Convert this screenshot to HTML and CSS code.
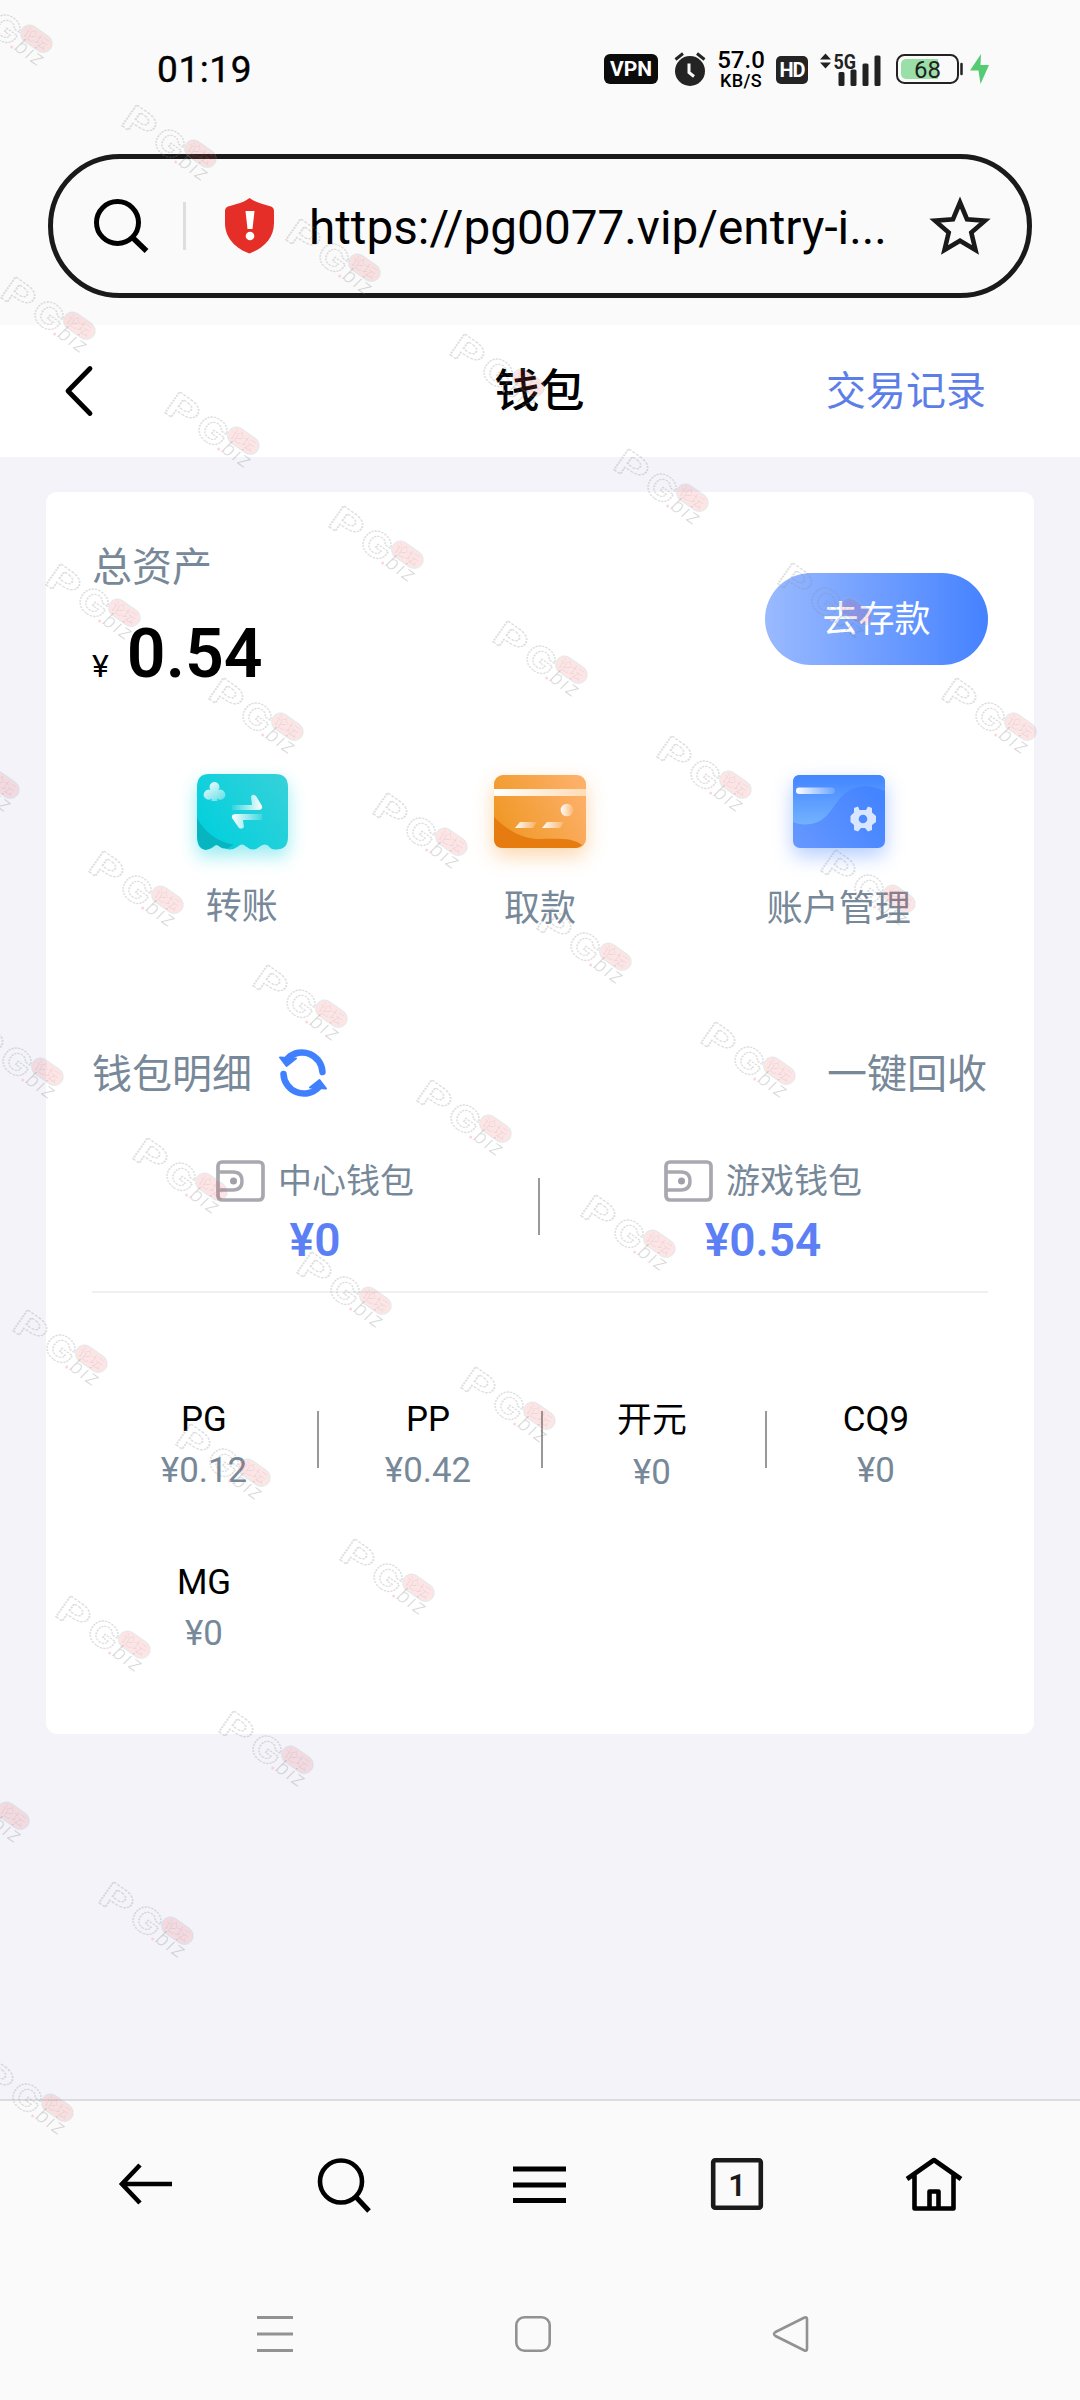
FILE: index.html
```html
<!DOCTYPE html>
<html lang="zh-CN">
<head>
<meta charset="utf-8">
<title>钱包</title>
<link rel="stylesheet" href="styles.css">
</head>
<body>
<div class="screen">
  <div class="status">
    <span class="time">01:19</span>
    <div class="indicators">
      <span class="vpn">VPN</span>
      <svg class="alarm" width="32" height="34" viewBox="0 0 32 34"><circle cx="16" cy="19" r="15" fill="#242424"/><path d="M1.5 7.500 9 1.500M30.500 7.500 23 1.500" stroke="#242424" stroke-width="3" fill="none"/><path d="M15 11.500v9l5 4" fill="none" stroke="#fafafa" stroke-width="3"/></svg>
      <div class="speed"><span>57.0</span><small>KB/S</small></div>
      <span class="hd">HD</span>
      <svg class="signal" width="62" height="34" viewBox="0 0 62 34"><path d="M0 7.500 5.500 1.500 11 7.500zM0 10.500 5.500 16.500 11 10.500z" fill="#222"/><text x="13.500" y="16.500" font-size="20" font-weight="700" textLength="22.500" lengthAdjust="spacingAndGlyphs" fill="#222">5G</text><path d="M20 21.500h3v11h-3zM32 19h3v13.500h-3zM44 13h3v19.500h-3zM56 5h3v27.500h-3z" fill="#222" stroke="#222" stroke-width="3" stroke-linejoin="round"/></svg>
      <svg class="battery" width="94" height="30" viewBox="0 0 94 30"><rect x="1" y="1" width="61" height="28" rx="7.500" fill="#fafafa" stroke="#222" stroke-width="2"/><path d="M42 5H10a5 5 0 0 0-5 5v10a5 5 0 0 0 5 5h32z" fill="#9bdfa8"/><path d="M65.500 10v10" stroke="#222" stroke-width="2.500" stroke-linecap="round"/><text x="31.500" y="23.500" font-size="24" text-anchor="middle" fill="#222">68</text><path d="M85 0 74 16.500h8.500L84.500 30 93 11h-8.500z" fill="#55cb73"/></svg>
    </div>
  </div>

  <div class="address">
    <svg class="find" width="56" height="56" viewBox="0 0 56 56"><circle cx="23.500" cy="23.500" r="21" fill="none" stroke="#000" stroke-width="5"/><path d="m38 38 14.500 14" stroke="#000" stroke-width="5.500"/></svg>
    <i class="bar"></i>
    <svg class="shield" width="49" height="56" viewBox="0 0 49 56"><path d="M24.500 0C30 4.500 39 6.500 46 8.500Q49 9.500 49 13v12C49 41 37 51 24.500 55.500 12 51 0 41 0 25V13Q0 9.500 3 8.500C10 6.500 19 4.500 24.500 0Z" fill="#e42e27"/><path d="M20.500 13h9l-2 18h-5z" fill="#fff"/><circle cx="25" cy="38" r="4.300" fill="#fff"/></svg>
    <span class="url">https://pg0077.vip/entry-i...</span>
    <svg class="star" width="60" height="58" viewBox="0 0 60 58"><path d="m30 5.500 7 16.700 18 1.500L41.300 35.500 45.500 53 30 43.700 14.500 53l4.200-17.500L5 23.700l18-1.500z" fill="none" stroke="#1a1a1a" stroke-width="4.600"/></svg>
  </div>

  <header class="header">
    <svg class="back" width="28" height="50" viewBox="0 0 28 50"><path d="M25 2.500 3 25l22 22.500" fill="none" stroke="#000" stroke-width="4.800" stroke-linecap="round" stroke-linejoin="round"/></svg>
    <h1>钱包</h1>
    <a>交易记录</a>
  </header>

  <main>
    <section class="card">
      <div class="assets">
        <div>
          <p class="muted">总资产</p>
          <p class="total"><small>¥</small><b>0.54</b></p>
        </div>
        <button class="deposit">去存款</button>
      </div>

      <div class="actions">
        <div class="action first">
          <svg class="teal" width="92" height="76" viewBox="0 0 92 76"><defs><linearGradient id="tg" x1="0" y1=".7" x2="1" y2=".1"><stop stop-color="#02d0dd"/><stop offset="1" stop-color="#35d1d9"/></linearGradient><linearGradient id="w1"><stop stop-color="#fff" stop-opacity=".1"/><stop offset="1" stop-color="#fff"/></linearGradient><linearGradient id="w2"><stop stop-color="#fff"/><stop offset="1" stop-color="#fff" stop-opacity=".15"/></linearGradient><linearGradient id="w3" x2=".8" y2="1"><stop stop-color="#fff"/><stop offset="1" stop-color="#fff" stop-opacity=".35"/></linearGradient></defs><path d="M12 0h66q13 0 13 13v50q0 13-13 12.500-4 0-6-3-4-4-9 0-7 6-14 0-4-4-8 0-8 6-16 0-4-4-8 0-3 3-9 3Q0 75 0 62V13Q0 0 12 0Z" fill="url(#tg)"/><path d="M0 44q12 22 37 27-3 1-4 2-5 3-10 0-4-4-8 0-3 3-7 3Q1 74 0 62z" fill="#06b5bf"/><path d="M12.500 13a5 5 0 1 1 9 3 5 5 0 1 1-1.500 8.500l.5 2.500h-6l.5-2.500A5 5 0 1 1 13.500 16Q12.500 14.500 12.500 13Z" fill="url(#w3)"/><path d="M35 31h20l-1-8q1-4 5-1l6 10q1 4-4 4H35z" fill="url(#w1)"/><path d="M65 46H46l1 7q-2 3-5 1l-7-10q-1-4 4-4h26z" fill="url(#w2)"/></svg>
          <span>转账</span>
        </div>
        <div class="action">
          <svg class="orange" width="92" height="73" viewBox="0 0 92 73"><defs><linearGradient id="og" y1=".7" y2=".3"><stop stop-color="#ef9724"/><stop offset="1" stop-color="#fdb068"/></linearGradient><linearGradient id="os"><stop stop-color="#fff"/><stop offset="1" stop-color="#ffdcb5"/></linearGradient></defs><rect width="92" height="73" rx="9" fill="url(#og)"/><path d="M0 14h92v7H0z" fill="url(#os)"/><path d="M0 42C14 56 28 63 42 64c20 0 36-2 46 6q-3 3-6 3H9q-9 0-9-9z" fill="#e67b10"/><circle cx="73" cy="35" r="6.300" fill="url(#w2)"/><path d="m26 47-5 6h18l4-6z" fill="url(#w2)"/><path d="m53 47-5 6h18l4-6z" fill="url(#w2)"/></svg>
          <span>取款</span>
        </div>
        <div class="action">
          <svg class="blue" width="92" height="73" viewBox="0 0 92 73"><defs><linearGradient id="bg" x1="0" y1="1" x2="1" y2=".4"><stop stop-color="#6798ff"/><stop offset="1" stop-color="#4384ff"/></linearGradient><linearGradient id="bw" x2="0" y2="1"><stop stop-color="#4285ff"/><stop offset="1" stop-color="#73b2ff"/></linearGradient></defs><rect width="92" height="73" rx="7" fill="url(#bg)"/><path d="M7 0h78q7 0 7 7v9Q64 4 48 22C38 34 34 46 18 49 10 50 4 49 0 47V7Q0 0 7 0Z" fill="url(#bw)"/><rect x="3" y="12.500" width="39" height="6.500" rx="3.200" fill="url(#w2)"/><g transform="translate(70 44)"><path d="M-3.500-9-5-12.500l-4 1.500v4.500L-12.500-3v6L-9 6v5l4 1.500L-2 9h4l3 3.500L9 11V6l4-3v-6l-4-3.500V-11l-4-1.500L3-9ZM-4.300 0a4.300 4.300 0 1 0 8.600 0 4.300 4.300 0 1 0-8.600 0Z" fill="#e4edff" fill-opacity=".93" fill-rule="evenodd"/></g></svg>
          <span>账户管理</span>
        </div>
      </div>

      <div class="detail-head">
        <span>钱包明细</span>
        <svg width="50" height="50" viewBox="0 0 50 50"><path d="M10 10A20.500 20.500 0 0 1 44.500 24M40 40A20.500 20.500 0 0 1 5.500 26" fill="none" stroke="#4080ff" stroke-width="6.500" stroke-linecap="round"/><path d="M2 9.500 18 10.500 8.500 18zM48 40.500 32 39.500 41.500 32z" fill="#4080ff" stroke="#4080ff" stroke-width="2" stroke-linejoin="round"/></svg>
        <a>一键回收</a>
      </div>

      <div class="wallets">
        <div class="wallet">
          <div class="wallet-name"><svg width="49" height="42" viewBox="0 0 49 42"><rect x="2" y="2" width="45" height="38" rx="4" fill="none" stroke="#a8a8b0" stroke-width="3.700"/><path d="M2 12h15q9 0 9 9t-9 9H2" fill="none" stroke="#a8a8b0" stroke-width="3.400"/><circle cx="17.500" cy="21" r="3.500" fill="#a0a0a8"/></svg><span>中心钱包</span></div>
          <strong>¥0</strong>
        </div>
        <i class="split"></i>
        <div class="wallet">
          <div class="wallet-name"><svg width="49" height="42" viewBox="0 0 49 42"><rect x="2" y="2" width="45" height="38" rx="4" fill="none" stroke="#a8a8b0" stroke-width="3.700"/><path d="M2 12h15q9 0 9 9t-9 9H2" fill="none" stroke="#a8a8b0" stroke-width="3.400"/><circle cx="17.500" cy="21" r="3.500" fill="#a0a0a8"/></svg><span>游戏钱包</span></div>
          <strong>¥0.54</strong>
        </div>
      </div>

      <div class="platforms">
        <div class="platform line"><b>PG</b><span>¥0.12</span></div>
        <div class="platform line"><b>PP</b><span>¥0.42</span></div>
        <div class="platform line cjk"><b>开元</b><span>¥0</span></div>
        <div class="platform"><b>CQ9</b><span>¥0</span></div>
        <div class="platform"><b>MG</b><span>¥0</span></div>
      </div>
    </section>
  </main>

  <nav class="browser-nav">
    <svg width="60" height="60" viewBox="0 0 60 60"><path d="M24 11 6 30l18 19M6 30h50" fill="none" stroke="#000" stroke-width="4.600"/></svg>
    <svg width="60" height="60" viewBox="0 0 60 60"><circle cx="28" cy="27.500" r="21" fill="none" stroke="#000" stroke-width="4.600"/><path d="m43 43 13 14" stroke="#000" stroke-width="5"/></svg>
    <svg width="60" height="60" viewBox="0 0 60 60"><path d="M3 15h53M3 31h53M3 46.500h53" stroke="#000" stroke-width="4.800"/></svg>
    <svg width="60" height="60" viewBox="0 0 60 60"><rect x="6.200" y="6.200" width="47.600" height="47.600" rx="2" fill="none" stroke="#1a1a1a" stroke-width="4.600"/><text x="30" y="42" font-size="31" font-weight="600" text-anchor="middle" fill="#1a1a1a">1</text></svg>
    <svg width="60" height="60" viewBox="0 0 60 60"><path d="M3 25 30 6l27 19M10.500 20v34.500h39V20M25.500 54V37.500h9V54" fill="none" stroke="#000" stroke-width="4.600" stroke-linejoin="round"/></svg>
  </nav>

  <div class="system-nav">
    <svg width="38" height="38" viewBox="0 0 38 38"><path d="M1 2.500h36M1 19h36M1 35.500h36" stroke="#929292" stroke-width="2.800"/></svg>
    <svg width="38" height="38" viewBox="0 0 38 38"><rect x="2.300" y="2.300" width="33.400" height="33.400" rx="8" fill="none" stroke="#929292" stroke-width="2.600"/></svg>
    <svg width="38" height="38" viewBox="0 0 38 38"><path d="M3.500 17 32 2.800q3-1.300 3 1.200v30q0 2.500-3 1.200L3.500 21q-3-2 0-4Z" fill="none" stroke="#929292" stroke-width="2.600"/></svg>
  </div>

  <svg class="watermarks" width="1080" height="2400" viewBox="0 0 1080 2400">
    <defs>
      <g id="mark" transform="translate(0 21) rotate(35)">
        <g fill="none" stroke="#8b8b8b" stroke-opacity=".3" stroke-width="1.300" stroke-dasharray="2 1" font-family="Inter, sans-serif" font-weight="700" font-size="35"><text x="-2" y="0" textLength="33" lengthAdjust="spacingAndGlyphs">P</text><text x="35" y="0" textLength="31" lengthAdjust="spacingAndGlyphs">G</text></g>
        <circle cx="66" cy="-1" r="1.500" fill="#f6bcc6" fill-opacity=".6"/>
        <text x="69" y="0" font-size="21" font-style="italic" font-weight="300" letter-spacing="2" fill="#777" fill-opacity=".28">biz</text>
        <rect x="64" y="-31" width="35" height="18" rx="9" fill="#f44850" fill-opacity=".14" stroke="#80e0e0" stroke-opacity=".2"/>
        <text x="67" y="-17" font-size="14" font-weight="300" fill="#888" fill-opacity=".2">论坛</text>
      </g>
    </defs>
    <use href="#mark" x="-43" y="-11"/><use href="#mark" x="121" y="104"/><use href="#mark" x="285" y="218"/><use href="#mark" x="449" y="333"/><use href="#mark" x="613" y="448"/><use href="#mark" x="777" y="562"/><use href="#mark" x="941" y="677"/>
    <use href="#mark" x="0" y="276"/><use href="#mark" x="164" y="391"/><use href="#mark" x="328" y="505"/><use href="#mark" x="492" y="620"/><use href="#mark" x="656" y="735"/><use href="#mark" x="820" y="849"/>
    <use href="#mark" x="45" y="563"/><use href="#mark" x="208" y="677"/><use href="#mark" x="372" y="792"/><use href="#mark" x="536" y="907"/><use href="#mark" x="700" y="1021"/>
    <use href="#mark" x="-76" y="735"/><use href="#mark" x="88" y="850"/><use href="#mark" x="252" y="964"/><use href="#mark" x="416" y="1079"/><use href="#mark" x="580" y="1194"/>
    <use href="#mark" x="-32" y="1022"/><use href="#mark" x="132" y="1137"/><use href="#mark" x="296" y="1251"/><use href="#mark" x="460" y="1366"/>
    <use href="#mark" x="12" y="1309"/><use href="#mark" x="175" y="1423"/><use href="#mark" x="339" y="1538"/>
    <use href="#mark" x="55" y="1595"/><use href="#mark" x="218" y="1710"/>
    <use href="#mark" x="-66" y="1766"/><use href="#mark" x="98" y="1881"/>
    <use href="#mark" x="-22" y="2058"/>
  </svg>
</div>
</body>
</html>
```
FILE: styles.css
```css
* { box-sizing: border-box; }
body { margin: 0; background: #fafafa; color: #000; font-family: Roboto, "Noto Sans CJK SC", sans-serif; }
h1, p { margin: 0; }
svg { display: block; flex: none; overflow: visible; }
.screen { position: relative; width: 1080px; height: 2400px; overflow: hidden; display: flex; flex-direction: column; }

.status { height: 154px; padding: 48px 90px 0 157px; display: flex; justify-content: space-between; align-items: flex-start; }
.time { font-size: 37px; font-weight: 400; line-height: 44px; letter-spacing: .6px; -webkit-text-stroke: .4px #000; }
.indicators { display: flex; align-items: flex-start; padding-top: 4px; }
.vpn { width: 54px; height: 30px; margin-top: 2px; border-radius: 6px; background: #0c0c0c; color: #fff; font: 700 21px/31px Roboto, sans-serif; text-align: center; }
.alarm { margin-left: 16px; }
.speed { width: 48px; margin: -3px 0 0 11px; display: flex; flex-direction: column; align-items: center; font-weight: 500; }
.speed span { font-size: 24px; line-height: 23px; }
.speed small { font-size: 18px; line-height: 17px; letter-spacing: .3px; }
.hd { width: 32px; height: 28px; margin: 4px 0 0 11px; border-radius: 5px; background: #242424; color: #fff; font: 700 20px/28px Roboto, sans-serif; letter-spacing: -1px; text-align: center; }
.signal { margin-left: 12px; }
.battery { margin: 2px 0 0 14px; }

.address { width: 984px; height: 144px; margin: 0 48px; flex: none; border: 5px solid #1a1a1a; border-radius: 72px; display: flex; align-items: center; padding-left: 41px; }
.find { margin-top: 2px; }
.bar { width: 3px; height: 48px; margin: 0 39px 0 33px; background: #dedede; }
.url { width: 618px; padding: 3px 0 0 35px; font-size: 47.700px; line-height: 60px; white-space: nowrap; }
.star { margin-left: 38px; }

.header { height: 132px; margin-top: 27px; flex: none; background: #fff; display: grid; grid-template-columns: 1fr auto 1fr; align-items: center; padding: 0 94px 0 65px; }
.header h1 { font-size: 45px; font-weight: 500; line-height: 60px; padding-top: 2px; transform: translateX(14px); }
.header a { justify-self: end; color: #5d7ee8; font-size: 40px; line-height: 60px; padding-top: 1px; }

main { height: 1642px; flex: none; background: #f3f3f9; padding: 35px 46px 0; }
.card { height: 1242px; background: #fff; border-radius: 11px; padding: 46px 46px 0; color: #778899; }
.assets { display: flex; justify-content: space-between; height: 236px; }
.muted { font-size: 40px; line-height: 60px; }
.total { display: flex; align-items: baseline; gap: 18px; color: #000; line-height: 80px; margin-top: 16px; }
.total small { font-size: 32px; }
.total b { font-size: 68px; font-weight: 600; }
.deposit { width: 223px; height: 92px; margin-top: 35px; padding: 2px 0 0; border: 0; border-radius: 46px; background: linear-gradient(90deg, #9abaff, #4582ff); color: #fff; font: 400 36px/50px Roboto, "Noto Sans CJK SC", sans-serif; }

.actions { height: 264px; display: grid; grid-template-columns: repeat(3, 1fr); }
.action { display: flex; flex-direction: column; align-items: center; font-size: 36px; }
.action span { margin-top: 36px; line-height: 50px; }
.action svg { margin-top: 1px; }
.action.first svg { margin: 0 0 0 3px; }
.action.first span { margin: 32px 0 0 1px; }
.teal { filter: drop-shadow(0 8px 9px rgba(0, 208, 220, .4)); }
.orange { filter: drop-shadow(0 8px 10px rgba(245, 155, 50, .4)); }
.blue { filter: drop-shadow(0 8px 10px rgba(66, 130, 255, .4)); }

.detail-head { height: 72px; display: flex; align-items: center; font-size: 40px; line-height: 60px; }
.detail-head span, .detail-head a { padding-top: 2px; }
.detail-head svg { margin-left: 26px; margin-top: -2px; }
.detail-head a { margin: 0 1px 0 auto; }

.wallets { height: 183px; border-bottom: 2px solid #edf1f2; display: flex; padding: 46px 2px 0 0; }
.wallet { flex: 1; display: flex; flex-direction: column; align-items: center; }
.wallet-name { display: flex; align-items: center; gap: 13px; font-size: 34px; line-height: 50px; }
.wallet strong { color: #5d7ff5; font-size: 46px; font-weight: 600; line-height: 60px; margin-top: 4px; }
.split { width: 2px; height: 57px; margin-top: 22px; background: #999; }

.platforms { display: grid; grid-template-columns: repeat(4, 1fr); grid-auto-rows: 163px; padding: 94px 0 0; }
.platform { position: relative; display: flex; flex-direction: column; align-items: center; font-size: 34.900px; }
.platform b { font-weight: 400; color: #000; line-height: 51px; padding-top: 7px; }
.platform span { line-height: 51px; }
.platform.line::after { content: ""; position: absolute; top: 24px; right: -3px; width: 2px; height: 57px; background: #999; }
.platform.cjk b { padding-top: 8px; line-height: 52px; }

.browser-nav { height: 172px; flex: none; border-top: 2px solid #dcdcde; display: flex; justify-content: space-between; padding: 53px 116px 0; }
.system-nav { display: flex; gap: 220px; padding: 44px 0 0 256px; }

.watermarks { position: absolute; left: 0; top: 0; pointer-events: none; }
```
